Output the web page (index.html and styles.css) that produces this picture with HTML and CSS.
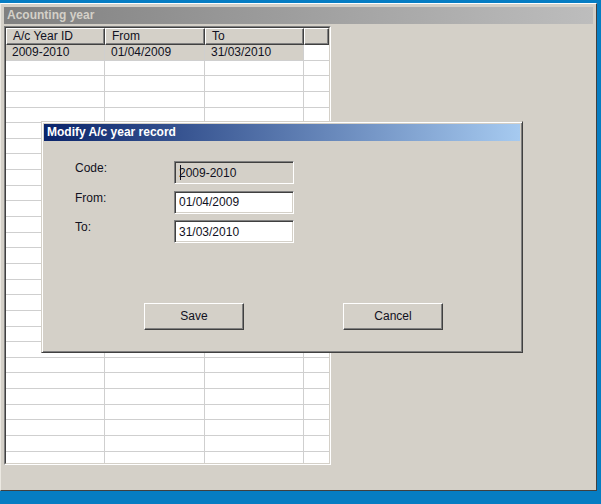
FILE: index.html
```html
<!DOCTYPE html>
<html lang="en">
<head>
    <meta charset="UTF-8">
    <meta name="viewport" content="width=device-width, initial-scale=1.0">
    <title>Acounting year</title>
    <link rel="stylesheet" href="styles.css">
</head>
<body>
    <div class="window">
        <div class="window-title">Acounting year</div>
        <div class="grid">
            <div class="grid-inner">
                <div class="row header">
                    <div class="cell">A/c Year ID</div>
                    <div class="cell">From</div>
                    <div class="cell">To</div>
                    <div class="cell"></div>
                </div>
                <div class="rows" id="rows">
                    <div class="row selected">
                        <div class="cell">2009-2010</div>
                        <div class="cell">01/04/2009</div>
                        <div class="cell">31/03/2010</div>
                        <div class="cell"></div>
                    </div>
                </div>
            </div>
        </div>
    </div>

    <div class="dialog">
        <div class="dialog-title">Modify A/c year record</div>
        <div class="form">
            <label class="form-label" for="code">Code:</label>
            <span class="caret-wrap"><input class="field readonly" id="code" value="2009-2010" readonly></span>
            <label class="form-label" for="from">From:</label>
            <input class="field" id="from" value="01/04/2009">
            <label class="form-label" for="to">To:</label>
            <input class="field" id="to" value="31/03/2010">
        </div>
        <div class="actions">
            <button class="btn">Save</button>
            <button class="btn">Cancel</button>
        </div>
    </div>

    <script>
        // fill the empty grid rows below the record
        const rows = document.getElementById('rows');
        for (let i = 0; i < 27; i++) {
            const row = document.createElement('div');
            row.className = 'row';
            for (let c = 0; c < 4; c++) {
                const cell = document.createElement('div');
                cell.className = 'cell';
                row.appendChild(cell);
            }
            rows.appendChild(row);
        }
    </script>
</body>
</html>
```

FILE: styles.css
```css
body {
    margin: 0;
    height: 504px;
    background: #067dc3;
    font-family: "Liberation Sans", Arial, sans-serif;
    font-size: 12px;
    color: #111122;
    overflow: hidden;
}
.window {
    box-sizing: border-box;
    margin-top: 3px;
    width: 597px;
    height: 488px;
    padding: 3px 3px 0 3px;
    background: #d4d0c8;
    border-top: 1px solid #ffffff;
    border-left: 1px solid #ece9e2;
    border-right: 1px solid #404040;
    border-bottom: 1px solid #404040;
}
.window-title {
    height: 17px;
    line-height: 17px;
    padding-left: 3px;
    background: linear-gradient(to right, #808080, #bdbdbd);
    color: #d4d0c8;
    font-weight: bold;
}
.grid {
    box-sizing: border-box;
    margin-top: 2px;
    width: 327px;
    height: 439px;
    border: 1px solid;
    border-color: #808080 #ffffff #ffffff #808080;
}
.grid-inner {
    height: 100%;
    box-sizing: border-box;
    border: 1px solid;
    border-color: #404040 #d4d0c8 #d4d0c8 #404040;
    background: #ffffff;
    overflow: hidden;
}
.row {
    display: grid;
    grid-template-columns: 99px 100px 99px 1fr;
    height: 15.65px;
}
.row .cell {
    box-sizing: border-box;
    padding-left: 6px;
    line-height: 15px;
    border-right: 1px solid #cfcfcf;
    border-bottom: 1px solid #cfcfcf;
    white-space: nowrap;
}
.row .cell:last-child {
    border-right: none;
}
.row.selected .cell {
    background: #d4d0c8;
}
.row.selected .cell:last-child {
    background: #ffffff;
}
.row.header {
    height: 17px;
}
.row.header .cell {
    background: #d4d0c8;
    line-height: 15px;
    border-top: 1px solid #ffffff;
    border-left: 1px solid #ffffff;
    border-right: 1px solid #404040;
    border-bottom: 1px solid #404040;
    box-shadow: inset -1px -1px #808080;
}
.row.header .cell:last-child {
    border-right: 1px solid #404040;
}

.dialog {
    position: absolute;
    left: 41px;
    top: 121px;
    box-sizing: border-box;
    width: 482px;
    height: 232px;
    padding: 2px;
    background: #d4d0c8;
    border: 1px solid;
    border-color: #d4d0c8 #404040 #404040 #d4d0c8;
    box-shadow: inset 1px 1px #ffffff, inset -1px -1px #808080;
}
.dialog-title {
    height: 17px;
    line-height: 17px;
    padding-left: 3px;
    background: linear-gradient(to right, #0a246a, #a6caf0);
    color: #ffffff;
    font-weight: bold;
}
.form {
    display: grid;
    grid-template-columns: 99px 120px;
    row-gap: 6.5px;
    margin: 20px 0 0 31px;
}
.form-label {
    line-height: 14px;
}
.field {
    box-sizing: border-box;
    width: 120px;
    height: 23px;
    margin: 0;
    padding: 0 0 0 4px;
    font-family: "Liberation Sans", Arial, sans-serif;
    font-size: 12px;
    color: #111122;
    background: #ffffff;
    border: 1px solid;
    border-color: #808080 #ffffff #ffffff #808080;
    box-shadow: inset 1px 1px #404040, inset -1px -1px #d4d0c8;
    outline: none;
}
.field.readonly {
    background: #d4d0c8;
}
.caret-wrap {
    position: relative;
    display: block;
    height: 23px;
}
.caret-wrap::after {
    content: "";
    position: absolute;
    left: 6px;
    top: 4px;
    width: 1px;
    height: 15px;
    background: #111122;
}
.actions {
    display: flex;
    gap: 99px;
    margin: 59.5px 0 0 100px;
}
.btn {
    box-sizing: border-box;
    width: 100px;
    height: 27px;
    padding: 0;
    font-family: "Liberation Sans", Arial, sans-serif;
    font-size: 12px;
    color: #111122;
    background: #d4d0c8;
    border: 1px solid;
    border-color: #ffffff #404040 #404040 #ffffff;
    box-shadow: inset -1px -1px #808080;
}
```
